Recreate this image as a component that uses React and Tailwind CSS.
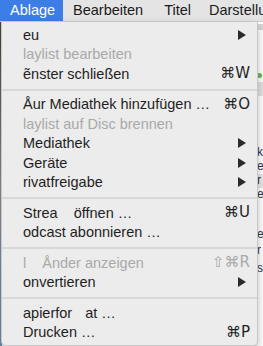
import React from "react";

// Menüeinträge der "Ablage"-Liste (Texte wie im Screenshot, inkl. fehlender Buchstaben)
const sections = [
  [
    { label: "eu", sub: true },
    { label: "laylist bearbeiten", disabled: true },
    { label: "ẽnster schließen", key: "⌘W" },
  ],
  [
    { label: "Åur Mediathek hinzufügen …", key: "⌘O" },
    { label: "laylist auf Disc brennen", disabled: true },
    { label: "Mediathek", sub: true },
    { label: "Geräte", sub: true },
    { label: "rivatfreigabe", sub: true },
  ],
  [
    { label: "Strea", gap: "öffnen …", gapW: "ml-[16px]", key: "⌘U" },
    { label: "odcast abonnieren …" },
  ],
  [
    { label: "l", gap: "Ånder anzeigen", gapW: "ml-[16px]", key: "⇧⌘R", disabled: true },
    { label: "onvertieren", sub: true },
  ],
  [
    { label: "apierfor", gap: "at …", gapW: "ml-[13px]" },
    { label: "Drucken …", key: "⌘P" },
  ],
];

const Arrow = () => (
  <svg width="8" height="10" viewBox="0 0 8 10" className="shrink-0">
    <path d="M0 0 L8 5 L0 10 Z" fill="#2b2b2b" />
  </svg>
);

function MenuItem({ item }) {
  const color = item.disabled ? "text-[#a9a9a9]" : "text-[#1f1f1f]";
  return (
    <div className={`h-[19.5px] flex items-center pl-[21px] ${item.sub ? "pr-[11px]" : "pr-[7px]"} ${color}`}>
      <span className="flex-1 whitespace-nowrap">
        {item.label}
        {item.gap && <span className={item.gapW}>{item.gap}</span>}
      </span>
      {item.key && (
        <span className="whitespace-nowrap font-['DejaVu_Sans','Liberation_Sans',sans-serif] text-[15px]">
          {item.key}
        </span>
      )}
      {item.sub && <Arrow />}
    </div>
  );
}

export default function App() {
  return (
    <div className="w-[263px] h-[346px] relative overflow-hidden bg-[#f6f6f6] font-['Liberation_Sans','Helvetica',sans-serif] text-[14.5px] leading-none">
      {/* Menüleiste */}
      <div className="h-[22px] flex items-stretch bg-[#e4e4e4] border-b border-[#cfcfcf] text-[#1a1a1a] whitespace-nowrap overflow-hidden">
        <div className="w-[63px] shrink-0 bg-[#3d7de6] text-white flex items-center pl-[10px]">Ablage</div>
        <div className="shrink-0 flex items-center pl-[10px]">Bearbeiten</div>
        <div className="shrink-0 flex items-center pl-[21px]">Titel</div>
        <div className="shrink-0 flex items-center pl-[18px]">Darstellung</div>
      </div>

      {/* Fenster dahinter */}
      <div className="flex h-[324px]">
        <div className="w-[2px] bg-gradient-to-b from-[#4a4432] via-[#8a8f94] to-[#6e8fb9]" />
        <div className="flex-1 bg-[#f3f3f3]" />
        <div className="w-[6px] bg-white flex flex-col text-[12px] text-[#333] pt-[2px]">
          <div className="h-[6px] bg-[#d6d6d6]" />
          <div className="h-[52px] flex items-end pb-[4px]">
            <span className="w-[5px] h-[5px] rounded-full bg-[#5bbf4a]" />
          </div>
          <div className="h-[14px] bg-[#e2e2e2]" />
          <div className="h-[50px]" />
          <div className="h-[14px]">k</div>
          <div className="h-[14px]">e</div>
          <div className="h-[14px] bg-[#e8e8e8]">r</div>
          <div className="h-[20px]">e</div>
          <div className="h-[20px]" />
          <div className="h-[16px]">e</div>
          <div className="h-[18px]">r</div>
          <div className="h-[18px]">s</div>
        </div>
      </div>

      {/* Ablage-Menü */}
      <div className="absolute top-[22px] left-[1px] w-[257px] bg-[#ececec] rounded-b-[5px] border-x border-b border-[#c8c8c8] shadow-[0_4px_10px_rgba(0,0,0,0.25)] pt-[3px] pb-[3px]">
        {sections.map((sec, i) => (
          <div key={i}>
            {i > 0 && (
              <div className="h-[11px] flex flex-col pt-[5px]">
                <div className="h-[2px] bg-[#d8d8d8]" />
              </div>
            )}
            {sec.map((item, j) => (
              <MenuItem key={j} item={item} />
            ))}
          </div>
        ))}
      </div>
    </div>
  );
}
